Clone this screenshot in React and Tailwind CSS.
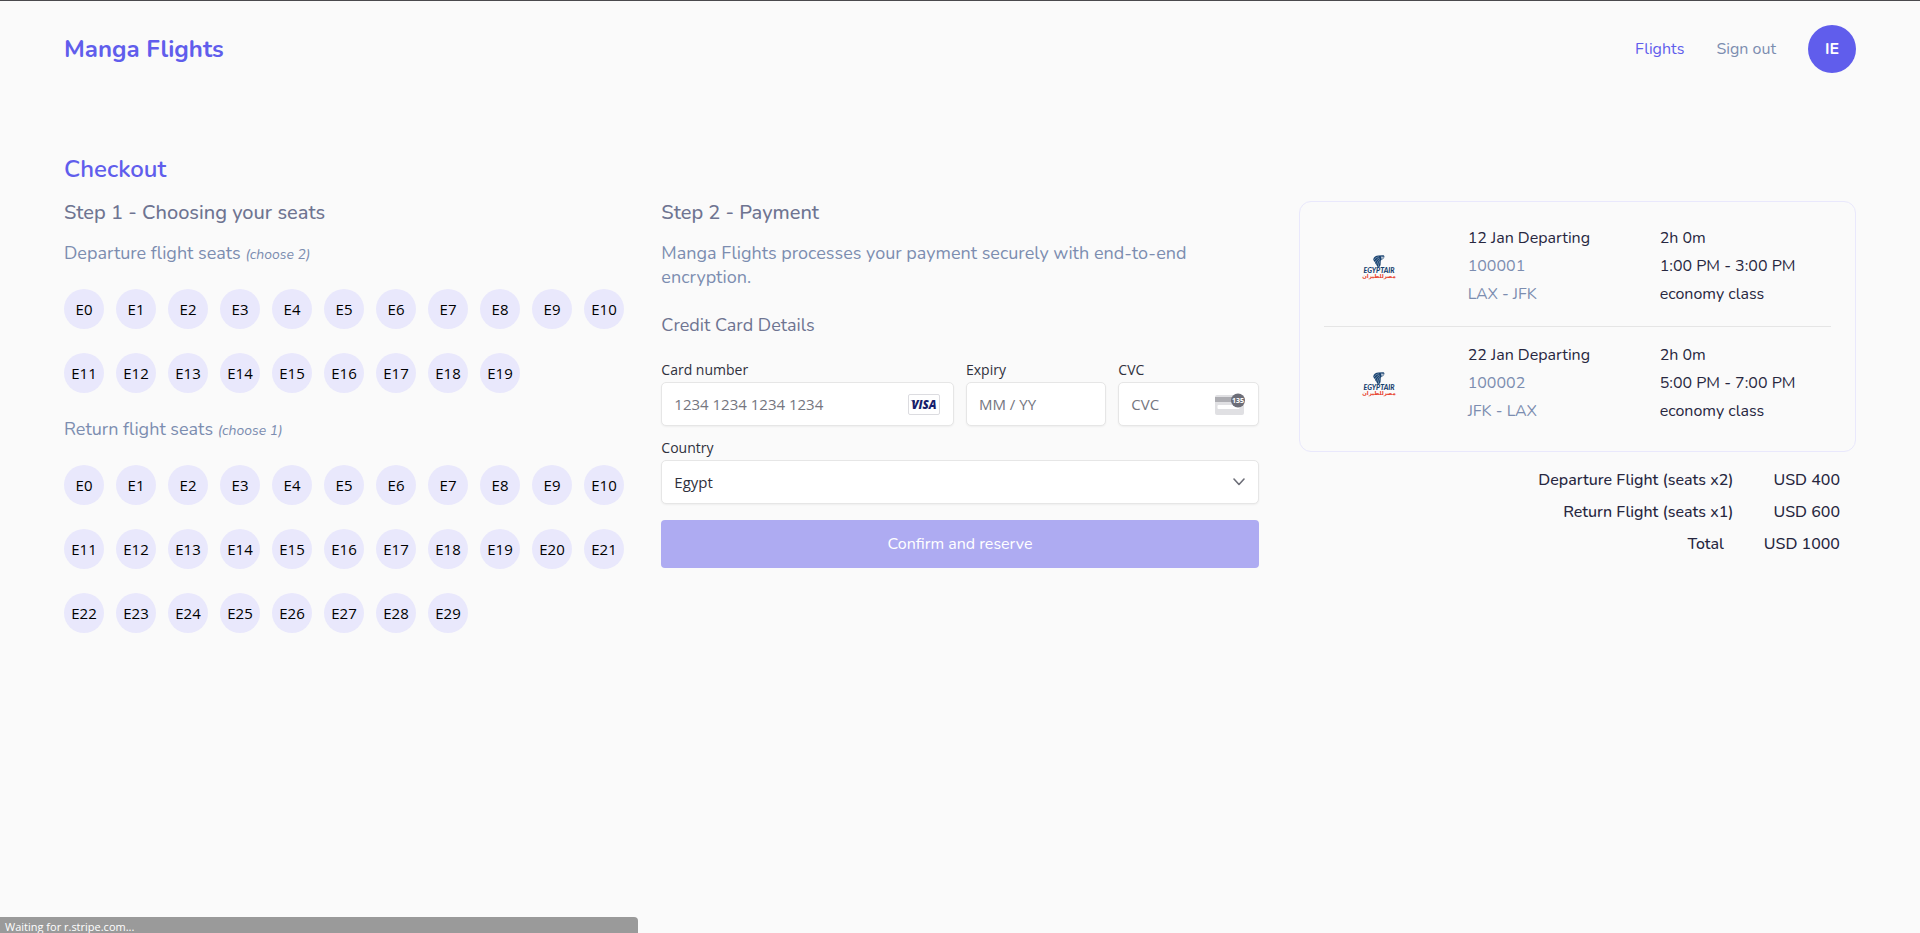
const FLIGHTS = [
  { date: "12 Jan Departing", number: "100001", route: "LAX - JFK", time: "1:00 PM - 3:00 PM" },
  { date: "22 Jan Departing", number: "100002", route: "JFK - LAX", time: "5:00 PM - 7:00 PM" },
];

const TOTALS = [
  ["Departure Flight (seats x2)", "USD 400"],
  ["Return Flight (seats x1)", "USD 600"],
  ["Total", "USD 1000"],
];

const FIELD =
  "h-11 w-full rounded-[5px] border border-[#e6e6e6] bg-white px-3 text-[15px] text-[#30313d] shadow-[0_1px_2px_rgba(0,0,0,0.05)] placeholder:text-[#757680]";
const LABEL = "mb-[3px] block text-sm leading-[18px] text-[#30313d]";

function AirlineLogo() {
  return (
    <svg viewBox="0 0 32 26" className="h-[26px] w-8 overflow-visible" role="img" aria-label="EgyptAir">
      <path
        d="M10.200 4.500C10.600 1.800 13 .6 15.500.4L20.200.3c1.300.3 1.500 1.400.9 2.500l-1.300 1.500-1.200.2c-.6.6-.7 1.600-.9 2.500l-.2 3.200-1.700 2.600c-1.200-.7-2-1.600-2.300-2.800-.9-.8-1.400-1.700-1.500-2.800-.9-.7-1.500-1.600-1.800-2.700z"
        fill="#17416f"
      />
      <path
        d="M11 5c1-1.900 2.700-2.900 5-3.200M12.200 7.400c.7-2.200 2-3.500 4.300-4.200M13.800 9.600c.4-2.500 1.300-4.100 3.200-5.200M15.500 11.600c0-2.500.6-4.500 1.900-5.900"
        fill="none"
        stroke="#b9c8d9"
        strokeWidth=".5"
      />
      <path d="M17.800 1.500l3.200.2-.7 1.800-1.700.4z" fill="#b9c6d4" />
      <text
        x="16"
        y="18"
        textAnchor="middle"
        fontSize="7"
        fontWeight="900"
        fontStyle="italic"
        fill="#17416f"
        fontFamily="Lato, sans-serif"
      >
        EGYPTAIR
      </text>
      <text
        x="16"
        y="23.200"
        textAnchor="middle"
        fontSize="5.400"
        fontWeight="700"
        fill="#e8442f"
        fontFamily="'DejaVu Sans', sans-serif"
      >
        مصرللطيران
      </text>
    </svg>
  );
}

function VisaIcon() {
  return (
    <svg viewBox="0 0 32 21" className="h-[21px] w-8" role="img" aria-label="Visa">
      <rect x=".5" y=".5" width="31" height="20" rx="1.500" fill="#fff" stroke="#dcdce0" />
      <text
        x="16"
        y="14.800"
        textAnchor="middle"
        fontSize="11.500"
        fontWeight="800"
        fontStyle="italic"
        fill="#171e6c"
        fontFamily="'Open Sans', sans-serif"
      >
        VISA
      </text>
      <path d="M2.500 6.600h4l1 3.500C6.500 8.400 5 7.400 2.500 6.600z" fill="#171e6c" />
    </svg>
  );
}

function CvcIcon() {
  return (
    <svg viewBox="0 0 30 23" className="h-[23px] w-[30px]" aria-hidden="true">
      <rect x="0" y="2" width="29" height="20" rx="2" fill="#e0e0e3" />
      <rect x="0" y="4" width="29" height="5" fill="#aeaeb3" />
      <rect x="2.500" y="12" width="22" height="4" rx="1" fill="#fff" />
      <circle cx="23" cy="7.500" r="7" fill="#6d6e78" />
      <text
        x="23"
        y="10.200"
        textAnchor="middle"
        fontSize="7"
        fontWeight="700"
        fill="#fff"
        fontFamily="'Open Sans', sans-serif"
      >
        135
      </text>
    </svg>
  );
}

function Seats({ title, choose, count }) {
  return (
    <section className="mb-6">
      <h3 className="text-lg leading-6 text-[#7c8db0]">
        {title} <em className="text-sm">(choose {choose})</em>
      </h3>
      <div className="mt-6 flex flex-wrap gap-x-3 gap-y-6 font-['Open_Sans',sans-serif]">
        {Array.from({ length: count }, (_, i) => (
          <button key={i} type="button" className="size-10 rounded-full bg-[#e9e8fc] text-[15px] text-black">
            E{i}
          </button>
        ))}
      </div>
    </section>
  );
}

export default function App() {
  return (
    <div className="min-h-screen border-t border-[#4a494d] bg-[#fafafa] px-16 font-['Nunito',sans-serif] text-base text-[#27273f]">
      <header className="flex items-center justify-between py-6">
        <a href="#" className="text-2xl font-bold text-[#605dec]">
          Manga Flights
        </a>
        <nav className="flex items-center gap-8">
          <a href="#" className="text-[#605dec]">
            Flights
          </a>
          <button type="button" className="text-[#7c8db0]">
            Sign out
          </button>
          <span className="flex size-12 items-center justify-center rounded-full bg-[#605dec] font-bold text-white">
            IE
          </span>
        </nav>
      </header>

      <main className="pt-14">
        <h1 className="text-2xl leading-8 font-semibold text-[#605dec]">Checkout</h1>
        <div className="mt-4 grid grid-cols-3">
          <div>
            <h2 className="mb-4 text-xl leading-6 font-medium text-[#6e7491]">Step 1 - Choosing your seats</h2>
            <Seats title="Departure flight seats" choose={2} count={20} />
            <Seats title="Return flight seats" choose={1} count={30} />
          </div>

          <form>
            <h2 className="mb-4 text-xl leading-6 font-medium text-[#6e7491]">Step 2 - Payment</h2>
            <p className="text-lg leading-6 text-[#7c8db0]">
              Manga Flights processes your payment securely with end-to-end encryption.
            </p>
            <h3 className="mt-6 mb-6 text-lg leading-6 text-[#6e7491]">Credit Card Details</h3>
            <div className="grid grid-cols-4 gap-x-3 gap-y-[13px] font-['Open_Sans',sans-serif]">
              <div className="col-span-2">
                <label htmlFor="card" className={LABEL}>
                  Card number
                </label>
                <div className="relative">
                  <input id="card" className={FIELD} placeholder="1234 1234 1234 1234" />
                  <span className="absolute inset-y-0 right-3.5 flex items-center">
                    <VisaIcon />
                  </span>
                </div>
              </div>
              <div>
                <label htmlFor="expiry" className={LABEL}>
                  Expiry
                </label>
                <input id="expiry" className={FIELD} placeholder="MM / YY" />
              </div>
              <div>
                <label htmlFor="cvc" className={LABEL}>
                  CVC
                </label>
                <div className="relative">
                  <input id="cvc" className={FIELD} placeholder="CVC" />
                  <span className="absolute inset-y-0 right-3.5 flex items-center">
                    <CvcIcon />
                  </span>
                </div>
              </div>
              <div className="col-span-4">
                <label htmlFor="country" className={LABEL}>
                  Country
                </label>
                <div className="relative">
                  <select id="country" className={`${FIELD} appearance-none`} defaultValue="Egypt">
                    <option>Egypt</option>
                  </select>
                  <span className="pointer-events-none absolute inset-y-0 right-3.5 flex items-center">
                    <svg
                      viewBox="0 0 12 8"
                      className="h-2 w-3"
                      fill="none"
                      stroke="#6d6e78"
                      strokeWidth="1.600"
                      strokeLinecap="round"
                      strokeLinejoin="round"
                      aria-hidden="true"
                    >
                      <path d="M1 1l5 5.500L11 1" />
                    </svg>
                  </span>
                </div>
              </div>
            </div>
            <button type="button" className="mt-4 h-12 w-full rounded bg-[#aeabf2] text-white">
              Confirm and reserve
            </button>
          </form>

          <aside className="pl-10">
            <div className="rounded-xl border border-[#e9e8fc] px-6 pt-[22px] pb-[26px]">
              {FLIGHTS.map((f, i) => (
                <article
                  key={f.number}
                  className={
                    i === 0
                      ? "grid grid-cols-[144px_192px_1fr] border-b border-[#e5e5e5] pb-[18px] leading-7"
                      : "grid grid-cols-[144px_192px_1fr] pt-[14px] leading-7"
                  }
                >
                  <div className="flex items-center pt-1 pl-[39px]">
                    <AirlineLogo />
                  </div>
                  <div>
                    <p>{f.date}</p>
                    <p className="text-[#7c8db0]">{f.number}</p>
                    <p className="text-[#7c8db0]">{f.route}</p>
                  </div>
                  <div>
                    <p>2h 0m</p>
                    <p>{f.time}</p>
                    <p>economy class</p>
                  </div>
                </article>
              ))}
            </div>
            <dl className="mt-4 flex flex-col gap-2 pr-4 leading-6 font-medium">
              {TOTALS.map(([label, amount]) => (
                <div key={label} className="flex justify-end gap-10">
                  <dt>{label}</dt>
                  <dd>{amount}</dd>
                </div>
              ))}
            </dl>
          </aside>
        </div>
      </main>

      <div className="fixed bottom-0 left-0 h-4 w-1/3 max-w-[638px] overflow-hidden rounded-tr bg-[#9a9a9a] px-[5px] pt-[2px] font-['Open_Sans',sans-serif] text-[11px] leading-4 text-white">
        Waiting for r.stripe.com...
      </div>
    </div>
  );
}
